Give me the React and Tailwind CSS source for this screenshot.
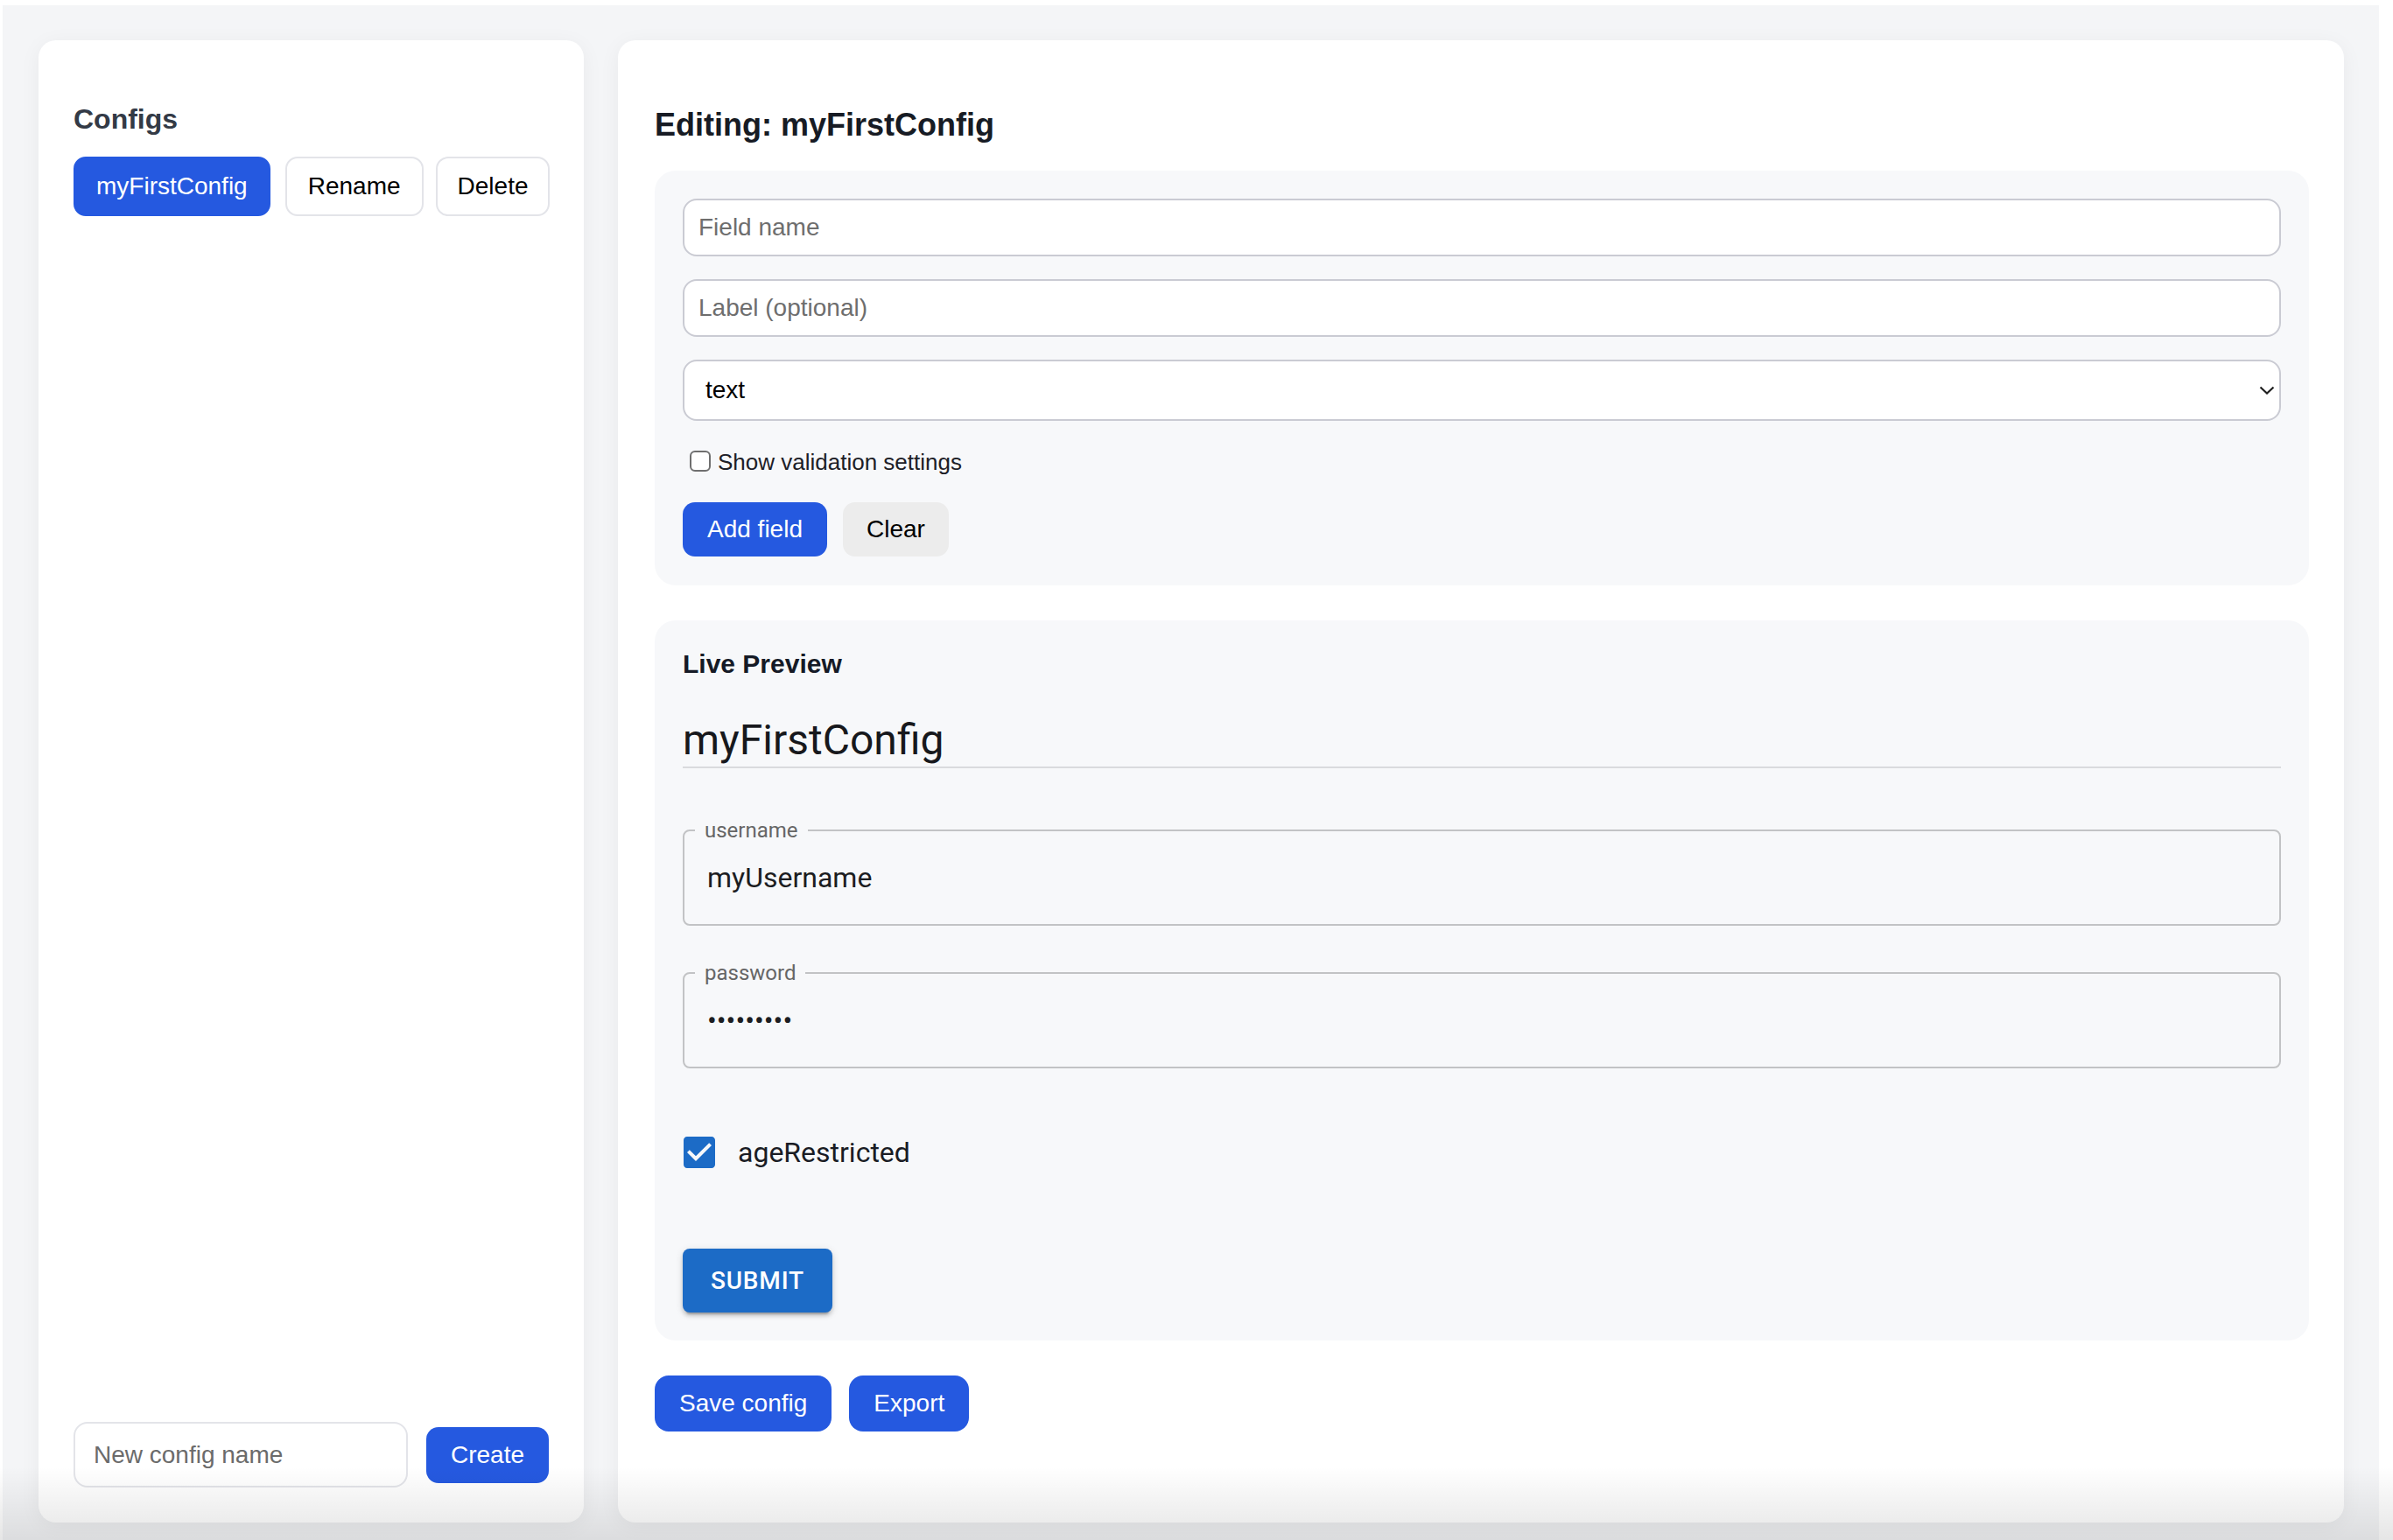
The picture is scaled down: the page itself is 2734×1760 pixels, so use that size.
import React, { useState } from 'react';

const ui = { fontFamily: '"Liberation Sans", Arial, sans-serif' };
const mui = { fontFamily: 'Roboto, "Liberation Sans", sans-serif' };

function ConfigsPanel({ configs, active }) {
  return (
    <aside className="w-[623px] h-[1694px] shrink-0 bg-white rounded-[20px] shadow-[0_4px_24px_rgba(0,0,0,0.05)] p-[40px] flex flex-col">
      <h2 className="mt-[31px] text-[32px] leading-[38px] font-bold text-[#333a46]">Configs</h2>

      {/* Lista de configs */}
      <div className="mt-[24px] flex items-center">
        {configs.map((c) => (
          <button
            key={c}
            className={`h-[68px] px-[24px] rounded-[14px] border-2 text-[28px] ${
              c === active ? 'bg-[#2559e0] border-[#2559e0] text-white' : 'bg-white border-[#e3e4e9] text-black'
            }`}
          >
            {c}
          </button>
        ))}
        <button className="ml-[17px] h-[68px] px-[24px] rounded-[14px] border-2 border-[#e3e4e9] bg-white text-[28px] text-black">Rename</button>
        <button className="ml-[14px] h-[68px] px-[23px] rounded-[14px] border-2 border-[#e3e4e9] bg-white text-[28px] text-black">Delete</button>
      </div>

      {/* Nueva config */}
      <div className="mt-auto flex items-center gap-[21px]">
        <input
          placeholder="New config name"
          className="flex-1 min-w-0 h-[75px] pl-[21px] rounded-[16px] border-2 border-[#e3e4e9] bg-white text-[28px] text-black placeholder:text-[#6b6b6b] outline-none"
          style={ui}
        />
        <button className="h-[64px] w-[140px] rounded-[14px] bg-[#2559e0] text-white text-[28px]">Create</button>
      </div>
    </aside>
  );
}

function FieldForm() {
  const [showValidation, setShowValidation] = useState(false);
  const inputCls =
    'w-full h-[66px] pl-[16px] rounded-[16px] border-2 border-[#cacbd3] bg-white text-[28px] text-black placeholder:text-[#6e6e6e] outline-none';

  return (
    <div className="bg-[#f7f8fa] rounded-[24px] p-[32px] pb-[33px]">
      <input placeholder="Field name" className={inputCls} style={ui} />
      <input placeholder="Label (optional)" className={`${inputCls} mt-[26px]`} style={ui} />
      <div className="relative mt-[26px]">
        <select
          defaultValue="text"
          className="w-full h-[70px] pl-[24px] appearance-none rounded-[16px] border-2 border-[#cacbd3] bg-white text-[28px] text-black outline-none"
          style={ui}
        >
          <option value="text">text</option>
          <option value="password">password</option>
          <option value="checkbox">checkbox</option>
        </select>
        {/* chevron nativo */}
        <svg className="absolute right-[7px] top-[30px] pointer-events-none" width="18" height="10" viewBox="0 0 18 10" fill="none">
          <path d="M1.5 1.5L9 8.5L16.5 1.5" stroke="#1f1f1f" strokeWidth="2.2" />
        </svg>
      </div>

      <label className="mt-[32px] h-[30px] flex items-center text-[26px] text-[#1d2027] cursor-pointer">
        <input
          type="checkbox"
          checked={showValidation}
          onChange={() => setShowValidation(!showValidation)}
          className="ml-[8px] mr-[8px] -mt-[3px] w-[24px] h-[24px] appearance-none rounded-[6px] border-2 border-[#6f6f6f] bg-white"
        />
        Show validation settings
      </label>

      <div className="mt-[31px] flex gap-[18px]">
        <button className="h-[62px] px-[28px] rounded-[14px] bg-[#2559e0] text-white text-[28px]">Add field</button>
        <button className="h-[62px] px-[27px] rounded-[14px] bg-[#ececec] text-black text-[28px]">Clear</button>
      </div>
    </div>
  );
}

function OutlinedField({ label, type = 'text', value }) {
  return (
    <div className="relative h-[110px] rounded-[8px] border-2 border-[#c2c3c5] flex items-center" style={mui}>
      <span className="absolute -top-[13px] left-[12px] px-[11px] bg-[#f7f8fa] text-[24px] leading-[24px] text-[#666666]">
        {label}
      </span>
      <input
        type={type}
        defaultValue={value}
        className="w-full h-full pl-[26px] bg-transparent text-[32px] text-[#1c1d21] outline-none"
        style={mui}
      />
    </div>
  );
}

function LivePreview({ name }) {
  return (
    <div className="mt-[40px] bg-[#f7f8fa] rounded-[24px] p-[32px]">
      <h3 className="text-[30px] leading-[36px] font-bold text-[#151a26]">Live Preview</h3>

      <div className="mt-[37px] h-[64px] border-b-2 border-[#d9dadd] text-[48px] leading-[64px] text-[#17181c]" style={mui}>
        {name}
      </div>

      <div className="mt-[70px]">
        <OutlinedField label="username" value="myUsername" />
      </div>
      <div className="mt-[53px]">
        <OutlinedField label="password" type="password" value="123456789" />
      </div>

      <div className="mt-[78px] h-[36px] flex items-center" style={mui}>
        <svg className="-my-[6px] ml-[-5px] mr-[-6px] shrink-0" width="48" height="48" viewBox="0 0 24 24">
          <path
            fill="#1c6bc6"
            d="M19 3H5c-1.11 0-2 .9-2 2v14c0 1.1.89 2 2 2h14c1.11 0 2-.9 2-2V5c0-1.1-.89-2-2-2zm-9 14l-5-5 1.41-1.41L10 14.17l7.59-7.59L19 8l-9 9z"
          />
        </svg>
        <span className="ml-[26px] text-[32px] text-[#1a1c24]">ageRestricted</span>
      </div>

      <button
        className="mt-[92px] h-[73px] px-[32px] rounded-[8px] bg-[#1c6bc6] text-white text-[28px] font-medium tracking-[0.8px] shadow-[0_6px_2px_-4px_rgba(0,0,0,0.2),0_4px_4px_0_rgba(0,0,0,0.14),0_2px_10px_0_rgba(0,0,0,0.12)]"
        style={mui}
      >
        SUBMIT
      </button>
    </div>
  );
}

export default function App() {
  const configs = ['myFirstConfig'];
  const active = 'myFirstConfig';

  return (
    <div className="relative bg-white h-[1760px] overflow-hidden pt-[6px] pl-[3px]" style={ui}>
      <div className="w-[2715px] h-[1754px] bg-[#f4f5f7] pt-[40px] pl-[41px] pr-[40px] flex gap-[39px]">
        <ConfigsPanel configs={configs} active={active} />

        <main className="flex-1 h-[1694px] bg-white rounded-[20px] shadow-[0_4px_24px_rgba(0,0,0,0.05)] pt-[40px] pl-[42px] pr-[40px]">
          <h1 className="mt-[36px] mb-[31px] text-[36px] leading-[42px] font-bold text-[#171b24]">Editing: {active}</h1>

          <FieldForm />
          <LivePreview name={active} />

          <div className="mt-[40px] flex gap-[20px]">
            <button className="h-[64px] px-[28px] rounded-[16px] bg-[#2559e0] text-white text-[28px]">Save config</button>
            <button className="h-[64px] px-[28px] rounded-[16px] bg-[#2559e0] text-white text-[28px]">Export</button>
          </div>
        </main>
      </div>

      {/* sombra inferior del viewport */}
      <div className="pointer-events-none absolute inset-x-0 bottom-0 h-[84px] bg-linear-to-b from-transparent to-black/[0.1]" />
    </div>
  );
}
